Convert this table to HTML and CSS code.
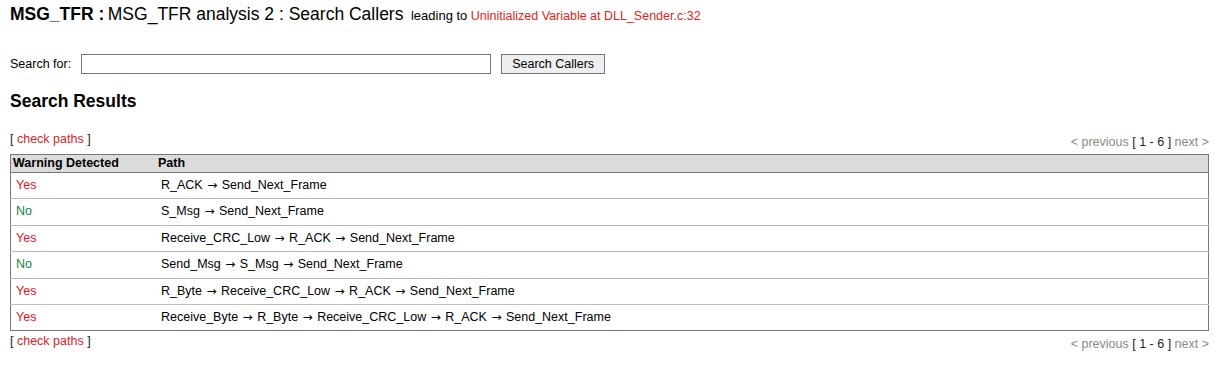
FILE: index.html
```html
<!DOCTYPE html>
<html>
<head>
<meta charset="utf-8">
<link rel="stylesheet" href="styles.css">
</head>
<body>
<div class="title">
  <span class="t-strong">MSG_TFR :</span>
  <span class="t-main">MSG_TFR analysis 2 : Search Callers</span>
  <span class="t-lead">leading to</span>
  <span class="t-warn">Uninitialized Variable at DLL_Sender.c:32</span>
</div>

<form class="search">
  <label class="search-label" for="q">Search for:</label>
  <input class="search-input" id="q" type="text">
  <button class="search-btn" type="button">Search Callers</button>
</form>

<h2 class="results-title">Search Results</h2>

<div class="bar">
  <span class="bracket">[ <a class="link" href="#">check paths</a> ]</span>
  <span class="pager">&lt; previous <span class="range">[ 1 - 6 ]</span> next &gt;</span>
</div>

<table class="results">
  <thead>
    <tr><th class="col-warn">Warning Detected</th><th>Path</th></tr>
  </thead>
  <tbody>
    <tr><td class="yes">Yes</td><td>R_ACK <span class="arr">→</span> Send_Next_Frame</td></tr>
    <tr><td class="no">No</td><td>S_Msg <span class="arr">→</span> Send_Next_Frame</td></tr>
    <tr><td class="yes">Yes</td><td>Receive_CRC_Low <span class="arr">→</span> R_ACK <span class="arr">→</span> Send_Next_Frame</td></tr>
    <tr><td class="no">No</td><td>Send_Msg <span class="arr">→</span> S_Msg <span class="arr">→</span> Send_Next_Frame</td></tr>
    <tr><td class="yes">Yes</td><td>R_Byte <span class="arr">→</span> Receive_CRC_Low <span class="arr">→</span> R_ACK <span class="arr">→</span> Send_Next_Frame</td></tr>
    <tr><td class="yes">Yes</td><td>Receive_Byte <span class="arr">→</span> R_Byte <span class="arr">→</span> Receive_CRC_Low <span class="arr">→</span> R_ACK <span class="arr">→</span> Send_Next_Frame</td></tr>
  </tbody>
</table>

<div class="bar bar-bottom">
  <span class="bracket">[ <a class="link" href="#">check paths</a> ]</span>
  <span class="pager">&lt; previous <span class="range">[ 1 - 6 ]</span> next &gt;</span>
</div>
</body>
</html>
```
FILE: styles.css
```css
html, body {
  margin: 0;
  padding: 0;
  background: #fff;
}
body {
  padding: 4px 6px 0 10px;
  font-family: "Liberation Sans", Arial, sans-serif;
  font-size: 12.5px;
  color: #000;
}
.title {
  line-height: 20px;
  white-space: nowrap;
}
.t-strong {
  font-size: 17.5px;
  font-weight: bold;
}
.t-main {
  font-size: 17.5px;
}
.t-lead {
  font-size: 13px;
  margin-left: 4px;
}
.t-warn {
  font-size: 12.5px;
  color: #e0261c;
}
.search {
  display: flex;
  align-items: center;
  margin: 28px 0 0 0;
  height: 20px;
}
.search-label {
  margin-right: 10px;
}
.search-input {
  box-sizing: border-box;
  width: 410px;
  height: 20px;
  margin: 0;
  padding: 0 2px;
  border: 1px solid #767676;
  font: 12px "Liberation Sans", Arial, sans-serif;
}
.search-btn {
  box-sizing: border-box;
  margin: 0 0 0 10px;
  height: 20px;
  width: 104px;
  padding: 0;
  border: 1px solid #767676;
  background: #efefef;
  font: 12.5px "Liberation Sans", Arial, sans-serif;
  color: #000;
}
.results-title {
  margin: 18px 0 0 0;
  font-size: 17.5px;
  line-height: 19px;
  font-weight: bold;
}
.bar {
  display: flex;
  justify-content: space-between;
  align-items: flex-start;
  margin-top: 21px;
  line-height: 14px;
  height: 22px;
}
.bar-bottom {
  margin-top: 3px;
}
.bracket {
  color: #222;
}
.link {
  color: #d9232e;
  text-decoration: none;
}
.pager {
  color: #8a8a8a;
  padding-top: 3px;
}
.range {
  color: #223;
}
.results {
  width: 100%;
  border-collapse: collapse;
  border: 1px solid #777;
}
.results th {
  background: #dcdcdc;
  text-align: left;
  font-weight: bold;
  line-height: 14px;
  padding: 1px 2px 2px;
  border-bottom: 1px solid #777;
}
.results th.col-warn {
  width: 141px;
}
.results td {
  line-height: 15.4px;
  padding: 5px;
  border-top: 1px solid #bcbcbc;
}
.results tbody tr:first-child td {
  border-top: none;
}
.arr {
  font-family: "DejaVu Sans", sans-serif;
  font-size: 12px;
  line-height: 1;
  margin: 0 1px;
}
.yes {
  color: #e8141c;
}
.no {
  color: #11864a;
}
```
